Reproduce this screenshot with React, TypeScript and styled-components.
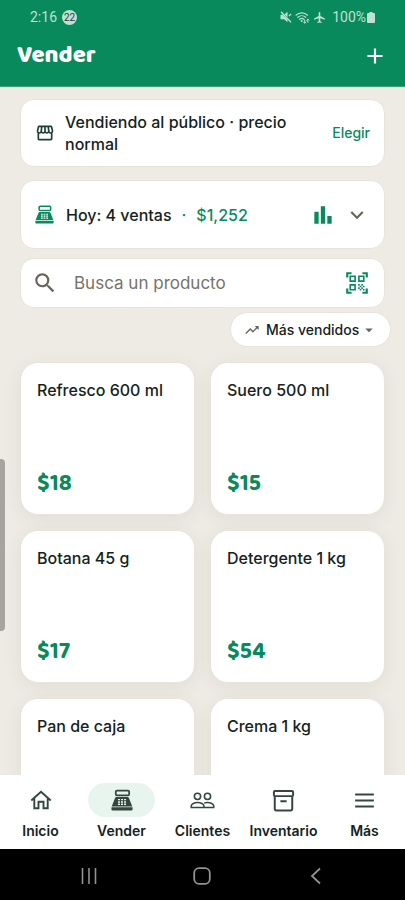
import React from "react";
import styled, { createGlobalStyle } from "styled-components";
import {
  MdAdd,
  MdAirplanemodeActive,
  MdArrowDropDown,
  MdBarChart,
  MdExpandMore,
  MdOutlineStorefront,
  MdQrCodeScanner,
  MdSearch,
  MdTrendingUp,
} from "react-icons/md";

const color = {
  green: "#088a5d",
  ink: "#14231d",
  muted: "#68645a",
  page: "#eeebe4",
  line: "#e8e4db",
  status: "#bfe0d2",
  tint: "#e8f5ef",
  navIcon: "#33473f",
};

const GlobalStyle = createGlobalStyle`
  *, *::before, *::after { box-sizing: border-box; }
  body { margin: 0; background: ${color.page}; }
  button, input, select { font: inherit; color: inherit; margin: 0; }
  h1, h2, p { margin: 0; }
`;

const Screen = styled.div`
  position: relative;
  display: flex;
  flex-direction: column;
  height: 100vh;
  overflow: hidden;
  background: ${color.page};
  color: ${color.ink};
  font-family: Inter, sans-serif;
  font-size: 16px;
  line-height: 22px;
  font-weight: 500;
`;

const Header = styled.header`
  flex: none;
  background: ${color.green};
  border-bottom: 1px solid #3fa27f;
`;

const StatusBar = styled.div`
  display: flex;
  align-items: center;
  justify-content: space-between;
  height: 34px;
  padding: 0 30px;
  color: ${color.status};
  font-family: Roboto, sans-serif;
  font-size: 14px;
  font-weight: 400;
`;

const StatusGroup = styled.div<{ $gap: number }>`
  display: flex;
  align-items: center;
  gap: ${(p) => p.$gap}px;
`;

const CountBadge = styled.span`
  display: grid;
  place-items: center;
  width: 15px;
  height: 15px;
  border-radius: 50%;
  background: ${color.status};
  color: #24423a;
  font-size: 10px;
  line-height: 15px;
`;

const TitleBar = styled.div`
  display: flex;
  align-items: center;
  justify-content: space-between;
  height: 52px;
  padding: 0 17px 8px;
  color: #fff;
`;

const Title = styled.h1`
  font-family: "Baloo 2", Lato, sans-serif;
  font-size: 24px;
  line-height: 32px;
  font-weight: 800;
`;

const IconButton = styled.button`
  display: grid;
  place-items: center;
  padding: 0;
  border: 0;
  background: none;
  color: inherit;
  cursor: pointer;
`;

const Main = styled.main`
  flex: 1;
  min-height: 0;
  overflow: hidden;
  padding: 12px 20px 0;
`;

const Panel = styled.section<{ $minHeight: number }>`
  display: flex;
  align-items: center;
  min-height: ${(p) => p.$minHeight}px;
  padding: 0 14px;
  border: 1px solid ${color.line};
  border-radius: 14px;
  background: #fff;
`;

const CustomerPanel = styled(Panel)`
  gap: 10px;

  svg {
    flex: none;
    color: #1c4033;
  }
`;

const CustomerText = styled.p`
  flex: 1;
`;

const TextButton = styled.button`
  padding: 0;
  border: 0;
  background: none;
  color: ${color.green};
  font-size: 14px;
  font-weight: 500;
  cursor: pointer;
`;

const SalesPanel = styled(Panel)`
  gap: 12px;
  margin-top: 13px;
  color: ${color.green};
`;

const SalesText = styled.p`
  display: flex;
  flex: 1;
  gap: 10px;
`;

const SalesCount = styled.span`
  color: ${color.ink};
`;

const SalesActions = styled.div`
  display: flex;
  align-items: center;
  gap: 8px;
`;

const ExpandButton = styled(IconButton)`
  color: ${color.muted};
`;

const SearchPanel = styled.label`
  display: flex;
  align-items: center;
  gap: 16px;
  height: 50px;
  margin-top: 9px;
  padding: 0 14px 0 11px;
  border: 1px solid ${color.line};
  border-radius: 14px;
  background: #fff;
  color: ${color.muted};
`;

const SearchInput = styled.input`
  flex: 1;
  min-width: 0;
  padding: 0;
  border: 0;
  outline: 0;
  background: none;
  font-size: 17px;
  font-weight: 400;

  &::placeholder {
    color: #77736a;
    opacity: 1;
  }
`;

const ScanButton = styled(IconButton)`
  color: ${color.green};
`;

const SortRow = styled.div`
  display: flex;
  justify-content: flex-end;
  margin: 4px -6px 0 0;
`;

const SortChip = styled.label`
  display: flex;
  align-items: center;
  height: 35px;
  padding: 0 12px 0 13px;
  border: 1px solid ${color.line};
  border-radius: 18px;
  background: #fff;
  color: ${color.muted};
`;

const SortSelect = styled.select`
  appearance: none;
  margin-left: 6px;
  padding: 0;
  border: 0;
  background: none;
  color: ${color.ink};
  font-size: 14px;
  font-weight: 500;
`;

const ProductGrid = styled.div`
  display: grid;
  grid-template-columns: 1fr 1fr;
  gap: 15px;
  margin-top: 15px;
`;

const ProductCard = styled.button`
  display: flex;
  flex-direction: column;
  align-items: flex-start;
  justify-content: space-between;
  min-height: 153px;
  padding: 16px;
  border: 1px solid ${color.line};
  border-radius: 18px;
  background: #fff;
  box-shadow: 0 4px 18px rgba(40, 55, 45, 0.07);
  text-align: left;
  cursor: pointer;
`;

const Price = styled.strong`
  color: ${color.green};
  font-family: "Baloo 2", Lato, sans-serif;
  font-size: 23px;
  line-height: 28px;
  font-weight: 700;
`;

const TabBar = styled.nav`
  display: grid;
  grid-template-columns: repeat(5, 1fr);
  flex: none;
  height: 74px;
  padding-top: 8px;
  background: #fff;
`;

const Tab = styled.a`
  display: flex;
  flex-direction: column;
  align-items: center;
  gap: 5px;
  color: ${color.ink};
  font-size: 14px;
  line-height: 18px;
  font-weight: 600;
  text-decoration: none;
`;

const TabIcon = styled.span<{ $active: boolean }>`
  display: grid;
  place-items: center;
  width: 67px;
  height: 34px;
  border-radius: 17px;
  background: ${(p) => (p.$active ? color.tint : "transparent")};
  color: ${color.navIcon};
`;

const SystemBar = styled.div`
  display: flex;
  align-items: center;
  justify-content: space-around;
  flex: none;
  height: 51px;
  padding: 2px 32px 0;
  background: #000;
  color: #929292;
`;

const EdgeHandle = styled.div`
  position: absolute;
  top: 51%;
  left: 0;
  width: 5px;
  height: 172px;
  border-radius: 0 4px 4px 0;
  background: #a5a49f;
`;

type IconProps = { size: number };

const RegisterIcon = ({ size }: IconProps) => (
  <svg width={size} height={size} viewBox="0 0 24 24" fill="currentColor" aria-hidden="true">
    <rect x="5.200" y="1.700" width="14.600" height="5.200" rx="1.300" fill="none" stroke="currentColor" strokeWidth="1.900" />
    <path
      fillRule="evenodd"
      d="M6.200 8.800h11.600c.9 0 1.600.5 1.900 1.300L23.200 19H.8l3.500-8.900c.3-.8 1-1.300 1.900-1.300zM7.600 10.900v1.500h2.200v-1.500zm3.300 0v1.500h2.200v-1.500zm3.300 0v1.500h2.200v-1.500zM7.600 13.400v1.500h2.200v-1.500zm3.300 0v1.500h2.200v-1.500zm3.300 0v1.500h2.200v-1.500zM7.600 15.900v1.500h2.200v-1.500zm3.300 0v1.500h2.200v-1.500zm3.300 0v1.500h2.200v-1.500z"
    />
    <path d="M.5 20h23v2a1.500 1.500 0 0 1-1.500 1.500H2A1.500 1.500 0 0 1 .5 22z" />
  </svg>
);

const HouseIcon = ({ size }: IconProps) => (
  <svg width={size} height={size} viewBox="0 0 24 24" fill="none" stroke="currentColor" strokeWidth="1.900" aria-hidden="true">
    <path d="M2.300 12.500 12 3.700l9.700 8.800M5.300 10.500v9.700h4.200v-6.500h5v6.500h4.200v-9.700" />
  </svg>
);

const PeopleIcon = ({ size }: IconProps) => (
  <svg width={size} height={size} viewBox="0 0 24 24" fill="none" stroke="currentColor" strokeWidth="1.500" aria-hidden="true">
    <circle cx="7.200" cy="8" r="3" />
    <circle cx="16.800" cy="8" r="3" />
    <path d="M1.200 18.800v-1.600c0-1.900 3.200-3.300 6.100-3.300s6.100 1.400 6.100 3.300v1.600zM13.600 14.500c1-.4 2.100-.6 3.200-.6 2.900 0 6 1.400 6 3.300v1.600h-9.400" />
  </svg>
);

const BoxIcon = ({ size }: IconProps) => (
  <svg width={size} height={size} viewBox="0 0 24 24" fill="none" stroke="currentColor" strokeWidth="1.900" strokeLinejoin="round" aria-hidden="true">
    <rect x="2.800" y="2.800" width="18.400" height="5" rx="1" />
    <path d="M3.600 7.800V20c0 .9.700 1.500 1.600 1.500h13.600c.9 0 1.600-.6 1.600-1.500V7.800M9 12.700h6" />
  </svg>
);

const MenuIcon = ({ size }: IconProps) => (
  <svg width={size} height={size} viewBox="0 0 24 24" stroke="currentColor" strokeWidth="1.900" aria-hidden="true">
    <path d="M3 6.200h18M3 12h18M3 17.800h18" />
  </svg>
);

const MutedIcon = () => (
  <svg width="12" height="12" viewBox="0 0 12 12" fill="currentColor" aria-hidden="true">
    <path d="M.5 3.800h2.300L7.500 8.500v2.800L4.200 8.200H.5zM4.600 3.200 7.500.7v5.400z" />
    <path d="M1 .8l10 10.400M9 5l2-2" fill="none" stroke="currentColor" strokeWidth="1.300" />
  </svg>
);

const WifiIcon = () => (
  <svg width="15" height="13" viewBox="0 0 15 13" fill="none" stroke="currentColor" strokeWidth="1.200" strokeLinecap="round" aria-hidden="true">
    <path d="M1 4.200C4.300 1 9.200 1 12.500 4.200M2.800 6.300c2.300-2.100 5.600-2.100 7.900 0M4.600 8.300c1.300-1.100 3-1.100 4.300 0" />
    <circle cx="6.700" cy="10" r="1" fill="currentColor" stroke="none" />
    <path d="M9.700 9v3M8.600 11l1.100 1.200 1.100-1.200M12.800 11.300v-3M11.700 9.200l1.100-1.200 1.100 1.200" strokeWidth="1" />
  </svg>
);

const BatteryIcon = () => (
  <svg width="8" height="11" viewBox="0 0 8 11" fill="currentColor" aria-hidden="true">
    <path d="M2.500 0h3v1H7a1 1 0 0 1 1 1v8a1 1 0 0 1-1 1H1a1 1 0 0 1-1-1V2a1 1 0 0 1 1-1h1.500z" />
  </svg>
);

const RecentsIcon = () => (
  <svg width="18" height="18" viewBox="0 0 18 18" stroke="currentColor" strokeWidth="1.600" aria-hidden="true">
    <path d="M2.500 1v16M9 1v16M15.500 1v16" />
  </svg>
);

const HomeKeyIcon = () => (
  <svg width="18" height="18" viewBox="0 0 18 18" fill="none" stroke="currentColor" strokeWidth="1.800" aria-hidden="true">
    <rect x="1.200" y="1.200" width="15.600" height="15.600" rx="4.800" />
  </svg>
);

const BackIcon = () => (
  <svg width="18" height="18" viewBox="0 0 18 18" fill="none" stroke="currentColor" strokeWidth="1.800" aria-hidden="true">
    <path d="M13 1.500 5 9l8 7.500" />
  </svg>
);

const products = [
  { name: "Refresco 600 ml", price: "$18" },
  { name: "Suero 500 ml", price: "$15" },
  { name: "Botana 45 g", price: "$17" },
  { name: "Detergente 1 kg", price: "$54" },
  { name: "Pan de caja", price: "" },
  { name: "Crema 1 kg", price: "" },
];

const tabs = [
  { label: "Inicio", Icon: HouseIcon, size: 24 },
  { label: "Vender", Icon: RegisterIcon, size: 22, active: true },
  { label: "Clientes", Icon: PeopleIcon, size: 25 },
  { label: "Inventario", Icon: BoxIcon, size: 25 },
  { label: "Más", Icon: MenuIcon, size: 25 },
];

export default function App() {
  return (
    <Screen>
      <GlobalStyle />
      <Header>
        <StatusBar>
          <StatusGroup $gap={5}>
            <span>2:16</span>
            <CountBadge>22</CountBadge>
          </StatusGroup>
          <StatusGroup $gap={6}>
            <StatusGroup $gap={3}>
              <MutedIcon />
              <WifiIcon />
              <MdAirplanemodeActive size={13} />
            </StatusGroup>
            <StatusGroup $gap={1}>
              <span>100%</span>
              <BatteryIcon />
            </StatusGroup>
          </StatusGroup>
        </StatusBar>
        <TitleBar>
          <Title>Vender</Title>
          <IconButton aria-label="Agregar">
            <MdAdd size={26} />
          </IconButton>
        </TitleBar>
      </Header>

      <Main>
        <CustomerPanel $minHeight={68}>
          <MdOutlineStorefront size={20} />
          <CustomerText>Vendiendo al público · precio normal</CustomerText>
          <TextButton>Elegir</TextButton>
        </CustomerPanel>

        <SalesPanel $minHeight={69}>
          <RegisterIcon size={19} />
          <SalesText>
            <SalesCount>Hoy: 4 ventas</SalesCount>
            <span>·</span>
            <span>$1,252</span>
          </SalesText>
          <SalesActions>
            <MdBarChart size={26} />
            <ExpandButton aria-label="Mostrar ventas">
              <MdExpandMore size={26} />
            </ExpandButton>
          </SalesActions>
        </SalesPanel>

        <SearchPanel>
          <MdSearch size={26} />
          <SearchInput type="text" placeholder="Busca un producto" aria-label="Busca un producto" />
          <ScanButton aria-label="Escanear código">
            <MdQrCodeScanner size={26} />
          </ScanButton>
        </SearchPanel>

        <SortRow>
          <SortChip>
            <MdTrendingUp size={16} />
            <SortSelect aria-label="Orden">
              <option>Más vendidos</option>
            </SortSelect>
            <MdArrowDropDown size={18} />
          </SortChip>
        </SortRow>

        <ProductGrid>
          {products.map((p) => (
            <ProductCard key={p.name}>
              <span>{p.name}</span>
              {p.price && <Price>{p.price}</Price>}
            </ProductCard>
          ))}
        </ProductGrid>
      </Main>

      <TabBar>
        {tabs.map(({ label, Icon, size, active }) => (
          <Tab key={label} href="#" aria-current={active ? "page" : undefined}>
            <TabIcon $active={!!active}>
              <Icon size={size} />
            </TabIcon>
            {label}
          </Tab>
        ))}
      </TabBar>

      <SystemBar>
        <IconButton aria-label="Recientes">
          <RecentsIcon />
        </IconButton>
        <IconButton aria-label="Inicio del sistema">
          <HomeKeyIcon />
        </IconButton>
        <IconButton aria-label="Atrás">
          <BackIcon />
        </IconButton>
      </SystemBar>
      <EdgeHandle />
    </Screen>
  );
}
